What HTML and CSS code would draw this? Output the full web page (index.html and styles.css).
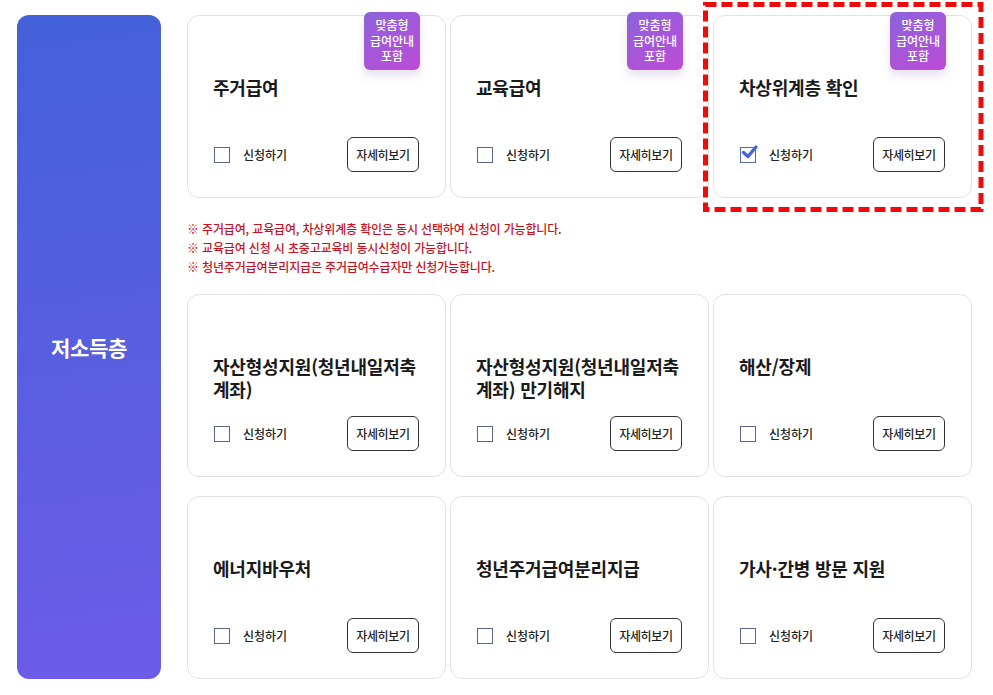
FILE: index.html
```html
<!DOCTYPE html>
<html lang="ko">
<head>
<meta charset="utf-8">
<link rel="stylesheet" href="styles.css">
</head>
<body>
<div class="page">
  <aside class="side"><span class="side-title">저소득층</span></aside>
  <main class="content">
    <div class="row">
      <div class="card">
        <div class="badge">맞춤형<br>급여안내<br>포함</div>
        <h3 class="title">주거급여</h3>
        <div class="actions">
          <label class="check"><span class="box"></span><span class="lbl">신청하기</span></label>
          <button class="more">자세히보기</button>
        </div>
      </div>
      <div class="card">
        <div class="badge">맞춤형<br>급여안내<br>포함</div>
        <h3 class="title">교육급여</h3>
        <div class="actions">
          <label class="check"><span class="box"></span><span class="lbl">신청하기</span></label>
          <button class="more">자세히보기</button>
        </div>
      </div>
      <div class="card">
        <svg class="highlight" width="283" height="213" viewBox="0 0 283 213"><rect x="4.5" y="3.5" width="275.5" height="205" fill="none" stroke="#f00a0a" stroke-width="5" stroke-dasharray="11 5"/></svg>
        <div class="badge">맞춤형<br>급여안내<br>포함</div>
        <h3 class="title">차상위계층 확인</h3>
        <div class="actions">
          <label class="check"><span class="box checked"><svg class="tick" width="22" height="20" viewBox="0 0 22 20"><path d="M4.5 9.5 L9 13.5 L17 4" fill="none" stroke="#4565d2" stroke-width="3.4" stroke-linecap="round" stroke-linejoin="round"/></svg></span><span class="lbl">신청하기</span></label>
          <button class="more">자세히보기</button>
        </div>
      </div>
    </div>
    <div class="notes">
      <p>※ 주거급여, 교육급여, 차상위계층 확인은 동시 선택하여 신청이 가능합니다.</p>
      <p>※ 교육급여 신청 시 초중고교육비 동시신청이 가능합니다.</p>
      <p>※ 청년주거급여분리지급은 주거급여수급자만 신청가능합니다.</p>
    </div>
    <div class="row">
      <div class="card">
        <h3 class="title">자산형성지원(청년내일저축계좌)</h3>
        <div class="actions">
          <label class="check"><span class="box"></span><span class="lbl">신청하기</span></label>
          <button class="more">자세히보기</button>
        </div>
      </div>
      <div class="card">
        <h3 class="title">자산형성지원(청년내일저축 계좌) 만기해지</h3>
        <div class="actions">
          <label class="check"><span class="box"></span><span class="lbl">신청하기</span></label>
          <button class="more">자세히보기</button>
        </div>
      </div>
      <div class="card">
        <h3 class="title">해산/장제</h3>
        <div class="actions">
          <label class="check"><span class="box"></span><span class="lbl">신청하기</span></label>
          <button class="more">자세히보기</button>
        </div>
      </div>
    </div>
    <div class="row row-last">
      <div class="card">
        <h3 class="title">에너지바우처</h3>
        <div class="actions">
          <label class="check"><span class="box"></span><span class="lbl">신청하기</span></label>
          <button class="more">자세히보기</button>
        </div>
      </div>
      <div class="card">
        <h3 class="title">청년주거급여분리지급</h3>
        <div class="actions">
          <label class="check"><span class="box"></span><span class="lbl">신청하기</span></label>
          <button class="more">자세히보기</button>
        </div>
      </div>
      <div class="card">
        <h3 class="title">가사·간병 방문 지원</h3>
        <div class="actions">
          <label class="check"><span class="box"></span><span class="lbl">신청하기</span></label>
          <button class="more">자세히보기</button>
        </div>
      </div>
    </div>
  </main>
</div>
</body>
</html>
```

FILE: styles.css
```css
* { box-sizing: border-box; }
html, body { margin: 0; padding: 0; background: #fff; }
body {
  font-family: "Noto Sans CJK KR", "Noto Sans", sans-serif;
  color: #1a1a1a;
  width: 993px;
  height: 695px;
  overflow: hidden;
}
.page {
  display: flex;
  gap: 26px;
  padding: 15px 21px 15px 17px;
}
.side {
  width: 144px;
  flex: none;
  border-radius: 12px;
  background: linear-gradient(172deg, #4361d8 0%, #5a5ee0 55%, #6d5be7 100%);
  display: flex;
  align-items: center;
  justify-content: center;
}
.side-title {
  color: #fff;
  font-size: 21px;
  font-weight: 700;
  letter-spacing: -0.3px;
}
.content {
  width: 785px;
  display: flex;
  flex-direction: column;
}
.row {
  display: grid;
  grid-template-columns: repeat(3, 259px);
  gap: 4px;
}
.row-last { margin-top: 19px; }
.card {
  position: relative;
  height: 183px;
  border: 1px solid #e2e2e2;
  border-radius: 12px;
  background: #fff;
  padding: 60px 25px 25px 25px;
  display: flex;
  flex-direction: column;
}
.title {
  margin: 0;
  font-size: 18px;
  line-height: 23px;
  font-weight: 700;
  color: #1a1a1a;
  letter-spacing: -0.2px;
}
.actions {
  margin-top: auto;
  display: flex;
  align-items: center;
  justify-content: space-between;
  padding: 0 1px 0 1px;
}
.check {
  display: flex;
  align-items: center;
  gap: 13px;
}
.box {
  position: relative;
  width: 16px;
  height: 16px;
  border: 1px solid #5b6587;
  background: #fff;
}
.box.checked { border-color: #5568a8; }
.tick {
  position: absolute;
  left: -2px;
  top: -5px;
}
.lbl {
  font-size: 12px;
  font-weight: 500;
  color: #222;
}
.more {
  width: 72px;
  height: 35px;
  border: 1px solid #333;
  border-radius: 6px;
  background: #fff;
  font-family: inherit;
  font-size: 12px;
  font-weight: 500;
  color: #222;
  padding: 0;
  letter-spacing: -0.3px;
}
.badge {
  position: absolute;
  top: -4px;
  right: 25px;
  width: 56px;
  height: 58px;
  border-radius: 6px;
  background: linear-gradient(150deg, #8c62dc 0%, #a856d9 55%, #bd4bd6 100%);
  color: #fff;
  font-size: 12px;
  font-weight: 500;
  line-height: 15.5px;
  text-align: center;
  padding-top: 5px;
  box-shadow: 0 6px 10px rgba(120, 90, 180, 0.18);
}
.highlight {
  position: absolute;
  left: -13px;
  top: -15px;
  pointer-events: none;
}
.notes {
  padding: 21px 0 18px 0;
}
.notes p {
  margin: 0;
  font-size: 12px;
  line-height: 19px;
  font-weight: 500;
  color: #cc0f1e;
  letter-spacing: -0.15px;
}
```
